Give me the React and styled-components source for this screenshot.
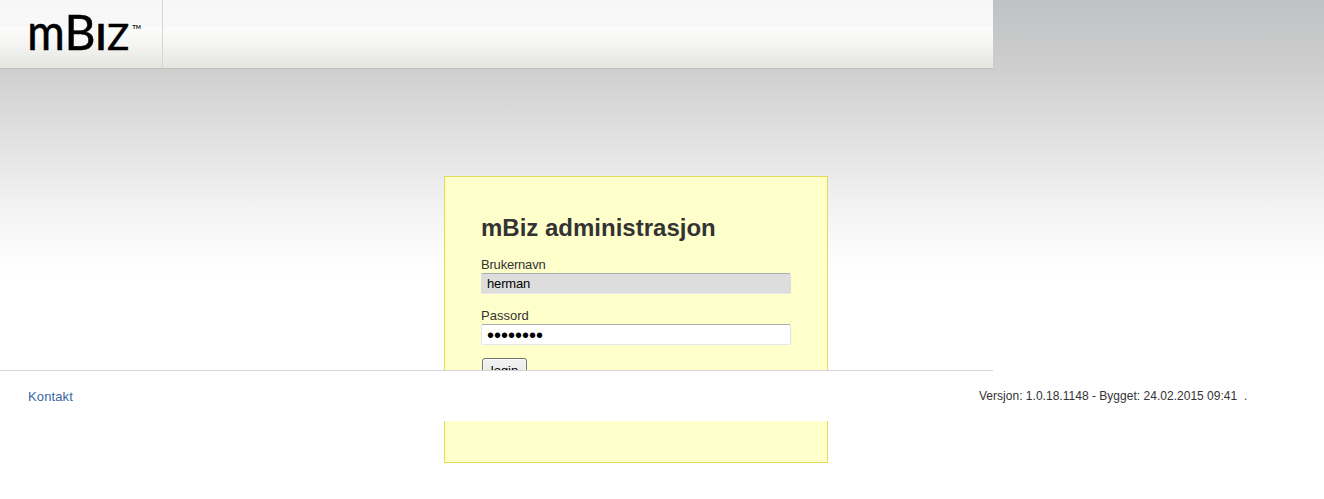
import React from 'react';
import styled, { createGlobalStyle } from 'styled-components';

const GlobalStyle = createGlobalStyle`
  html { height: 100%; background: #fff; }
  body {
    margin: 0;
    height: 499px;
    overflow: hidden;
    color: #333;
    font: 13px/15px "Liberation Sans", Arial, sans-serif;
  }
  * { box-sizing: border-box; }
`;

const Page = styled.div`
  position: relative;
  height: 499px;
  overflow: hidden;
  background: linear-gradient(
    #c0c1c3 0px, #c6c7c8 32px, #cfcfcf 70px, #dcdcdc 118px,
    #e8e8e8 165px, #f3f3f3 210px, #fbfbfb 250px, #fff 280px
  );
`;

const Header = styled.header`
  display: flex;
  width: 993px;
  height: 69px;
  border-bottom: 1px solid #bfbfbf;
  background: linear-gradient(#f7f7f7 0px, #f8f8f8 27px, #fdfdfc 28px, #f4f4f2 45px, #e4e4e0 68px);
`;

const Brand = styled.a`
  display: block;
  width: 163px;
  height: 67px;
  border-right: 1px solid #d5d5d5;
`;

const Logo = styled.svg`
  display: block;
  font-family: Lato, sans-serif;
  fill: #000;
`;

const LoginBox = styled.form`
  display: flex;
  flex-direction: column;
  align-items: flex-start;
  width: 384px;
  height: 287px;
  margin: 107px 0 0 444px;
  padding: 36px;
  border: 1px solid #e6db55;
  background: #ffffcc;
`;

const Title = styled.h1`
  margin: 0 0 15px;
  font-size: 24px;
  line-height: 29px;
`;

const Field = styled.label`
  display: flex;
  flex-direction: column;
  margin-bottom: ${(p) => p.$gap || 0}px;
  letter-spacing: ${(p) => p.$tracking || 0}px;
`;

const Input = styled.input`
  width: 310px;
  height: 21px;
  margin: 1px 0 0;
  padding: 0 5px 1px;
  border: 1px solid;
  border-color: ${(p) => (p.$filled ? '#abadb3 #dddddd #e3e9ef' : '#abadb3 #dbdfe6 #e3e9ef #e2e3ea')};
  border-radius: 2px;
  outline: 0;
  background: ${(p) => (p.$filled ? '#ddd' : '#fff')};
  color: #000;
  font: 13px "Liberation Sans", Arial, sans-serif;
  letter-spacing: ${(p) => (p.$filled ? '-0.15px' : '0')};

  &[type='password'] {
    padding: 2px 5px 0;
    font-size: 20px;
    line-height: 19px;
  }
`;

const LoginButton = styled.button`
  width: 45px;
  height: 23px;
  margin: 0 0 0 1px;
  padding: 1px 0 0;
  border: 1px solid #707070;
  border-radius: 3px;
  box-shadow: inset 0 0 0 1px #fcfcfc;
  background: linear-gradient(#f2f2f2 0%, #ebebeb 50%, #ddd 51%, #cfcfcf 100%);
  color: #000;
  font: 13px "Liberation Sans", Arial, sans-serif;
`;

const Footer = styled.footer`
  position: absolute;
  top: 370px;
  left: 0;
  display: flex;
  width: 993px;
  height: 51px;
  padding: 18px 0 0 28px;
  border-top: 1px solid #d5d5d5;
  background: #fff;
  white-space: pre;
`;

const ContactLink = styled.a`
  width: 951px;
  flex: none;
  color: #3766a6;
  letter-spacing: 0.12px;
  text-decoration: none;
`;

const Version = styled.span`
  flex: none;
  font-size: 12px;
  line-height: 14px;
  letter-spacing: 0.02px;
`;

export default function App() {
  return (
    <>
      <GlobalStyle />
      <Page>
        <Header>
          <Brand>
            <Logo width="162" height="67" role="img" aria-label="mBiz">
              <text transform="translate(27.2 49.6) scale(.92 1)" fontSize="49.5" stroke="#000" strokeWidth=".6">m</text>
              <text transform="translate(64.4 49.6) scale(.98 1)" fontSize="49" stroke="#000" strokeWidth=".5">B</text>
              <text transform="translate(94.2 49.6) scale(1.3 1)" fontSize="37" stroke="#000" strokeWidth=".5">I</text>
              <text transform="translate(107.2 49.6) scale(.98 1)" fontSize="37" stroke="#000" strokeWidth=".6">Z</text>
              <text transform="translate(132.5 28.5) scale(.9 1)" fontSize="6" fontWeight="700">TM</text>
            </Logo>
          </Brand>
        </Header>
        <LoginBox>
          <Title>mBiz administrasjon</Title>
          <Field $gap={14} $tracking={-0.2}>
            Brukernavn
            <Input $filled type="text" defaultValue="herman" />
          </Field>
          <Field $gap={13}>
            Passord
            <Input type="password" defaultValue="password" />
          </Field>
          <LoginButton type="button">login</LoginButton>
        </LoginBox>
        <Footer>
          <ContactLink>Kontakt</ContactLink>
          <Version>{'Versjon: 1.0.18.1148 - Bygget: 24.02.2015 09:41  .'}</Version>
        </Footer>
      </Page>
    </>
  );
}
